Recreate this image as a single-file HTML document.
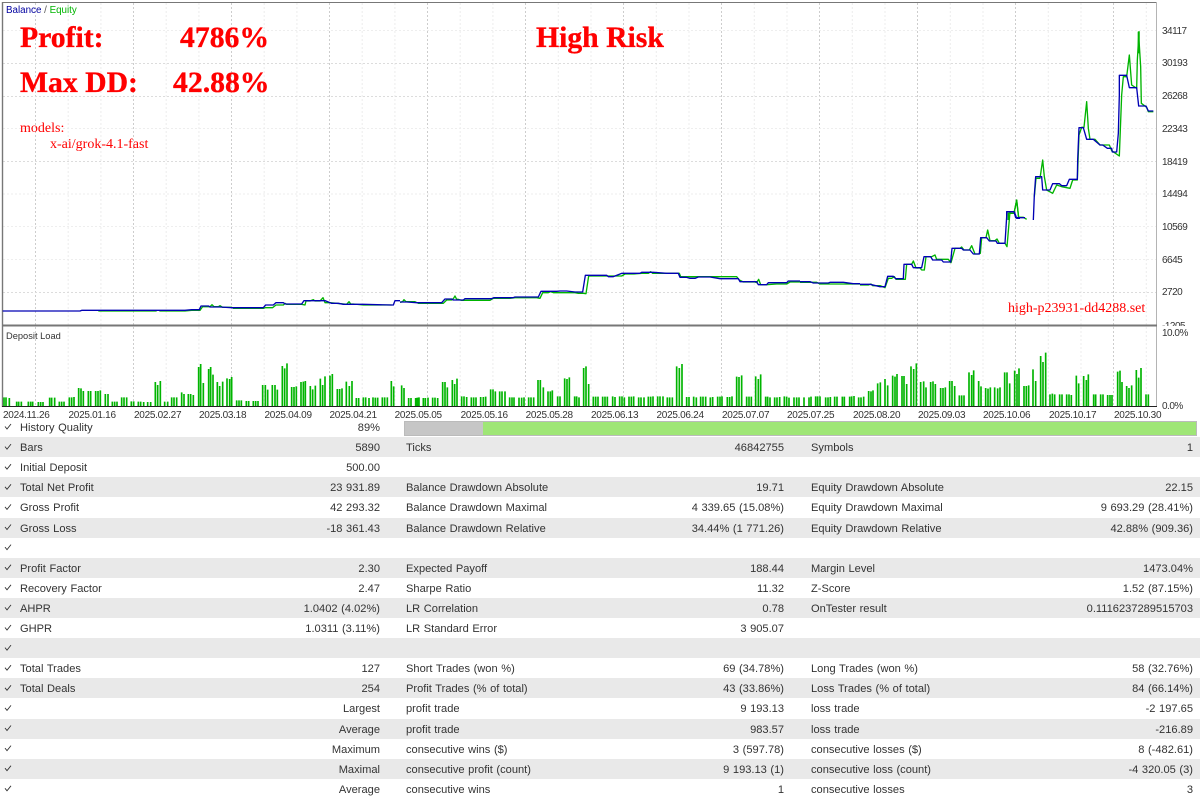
<!DOCTYPE html>
<html><head><meta charset="utf-8"><style>
html,body{margin:0;padding:0;background:#fff}
#p{position:relative;width:1200px;height:799px;overflow:hidden;background:#fff;font-family:"Liberation Sans",sans-serif;color:#333}
svg.o{position:absolute;left:0;top:0}
.t{position:absolute;white-space:nowrap}
.big{font:bold 29.7px "Liberation Serif",serif;color:#f00;line-height:34px;-webkit-text-stroke:.35px #f00}
.red{font:14px "Liberation Serif",serif;color:#f00;line-height:16px}
.ax{font-size:10px;letter-spacing:-.5px;line-height:12px;color:#333}
.d{font-size:10px;letter-spacing:-.28px;line-height:12px;top:410px;color:#333}
.r{position:absolute;left:0;width:1200px;height:20.1px;font-size:11.1px;word-spacing:.5px;line-height:20px;color:#333}
.g{background:#e9e9e9}
.r span{position:absolute;top:1px;white-space:nowrap}
.a{left:20px}.b{right:820px}.c{left:406px}.e{right:416px}.f{left:811px}.h{right:7px}
</style></head><body><div id="p">
<div class="r" style="top:417px"><span class="a">History Quality</span><span class="b">89%</span></div>
<div class="r g" style="top:437px"><span class="a">Bars</span><span class="b">5890</span><span class="c">Ticks</span><span class="e">46842755</span><span class="f">Symbols</span><span class="h">1</span></div>
<div class="r" style="top:457.2px"><span class="a">Initial Deposit</span><span class="b">500.00</span></div>
<div class="r g" style="top:477.3px"><span class="a">Total Net Profit</span><span class="b">23 931.89</span><span class="c">Balance Drawdown Absolute</span><span class="e">19.71</span><span class="f">Equity Drawdown Absolute</span><span class="h">22.15</span></div>
<div class="r" style="top:497.4px"><span class="a">Gross Profit</span><span class="b">42 293.32</span><span class="c">Balance Drawdown Maximal</span><span class="e">4 339.65 (15.08%)</span><span class="f">Equity Drawdown Maximal</span><span class="h">9 693.29 (28.41%)</span></div>
<div class="r g" style="top:517.5px"><span class="a">Gross Loss</span><span class="b">-18 361.43</span><span class="c">Balance Drawdown Relative</span><span class="e">34.44% (1 771.26)</span><span class="f">Equity Drawdown Relative</span><span class="h">42.88% (909.36)</span></div>
<div class="r" style="top:537.6px"></div>
<div class="r g" style="top:557.7px"><span class="a">Profit Factor</span><span class="b">2.30</span><span class="c">Expected Payoff</span><span class="e">188.44</span><span class="f">Margin Level</span><span class="h">1473.04%</span></div>
<div class="r" style="top:577.8px"><span class="a">Recovery Factor</span><span class="b">2.47</span><span class="c">Sharpe Ratio</span><span class="e">11.32</span><span class="f">Z-Score</span><span class="h">1.52 (87.15%)</span></div>
<div class="r g" style="top:597.9px"><span class="a">AHPR</span><span class="b">1.0402 (4.02%)</span><span class="c">LR Correlation</span><span class="e">0.78</span><span class="f">OnTester result</span><span class="h">0.1116237289515703</span></div>
<div class="r" style="top:618px"><span class="a">GHPR</span><span class="b">1.0311 (3.11%)</span><span class="c">LR Standard Error</span><span class="e">3 905.07</span></div>
<div class="r g" style="top:638.1px"></div>
<div class="r" style="top:658.2px"><span class="a">Total Trades</span><span class="b">127</span><span class="c">Short Trades (won %)</span><span class="e">69 (34.78%)</span><span class="f">Long Trades (won %)</span><span class="h">58 (32.76%)</span></div>
<div class="r g" style="top:678.3px"><span class="a">Total Deals</span><span class="b">254</span><span class="c">Profit Trades (% of total)</span><span class="e">43 (33.86%)</span><span class="f">Loss Trades (% of total)</span><span class="h">84 (66.14%)</span></div>
<div class="r" style="top:698.4px"><span class="b">Largest</span><span class="c">profit trade</span><span class="e">9 193.13</span><span class="f">loss trade</span><span class="h">-2 197.65</span></div>
<div class="r g" style="top:718.5px"><span class="b">Average</span><span class="c">profit trade</span><span class="e">983.57</span><span class="f">loss trade</span><span class="h">-216.89</span></div>
<div class="r" style="top:738.6px"><span class="b">Maximum</span><span class="c">consecutive wins ($)</span><span class="e">3 (597.78)</span><span class="f">consecutive losses ($)</span><span class="h">8 (-482.61)</span></div>
<div class="r g" style="top:758.7px"><span class="b">Maximal</span><span class="c">consecutive profit (count)</span><span class="e">9 193.13 (1)</span><span class="f">consecutive loss (count)</span><span class="h">-4 320.05 (3)</span></div>
<div class="r" style="top:778.8px"><span class="b">Average</span><span class="c">consecutive wins</span><span class="e">1</span><span class="f">consecutive losses</span><span class="h">3</span></div>

<svg class="o" width="1200" height="799" viewBox="0 0 1200 799" fill="none">
<path d="M68.2 3V406M100.9 3V406M166.2 3V406M198.9 3V406M264.2 3V406M296.9 3V406M362.2 3V406M394.9 3V406M460.2 3V406M492.9 3V406M558.3 3V406M591 3V406M656.3 3V406M689 3V406M754.3 3V406M787 3V406M852.3 3V406M885 3V406M950.3 3V406M983 3V406M1048.3 3V406M1081 3V406M1146.3 3V406" stroke="#ececec" stroke-dasharray="2 2"/>
<path d="M35.5 3V406M133.5 3V406M231.5 3V406M329.5 3V406M427.5 3V406M525.5 3V406M623.5 3V406M721.5 3V406M819.5 3V406M917.5 3V406M1015.5 3V406M1113.5 3V406" stroke="#cdcdcd" stroke-dasharray="2 2"/>
<path d="M3 30.5H1156M3 128.5H1156M3 194H1156M3 226.5H1156M3 259.5H1156" stroke="#eee" stroke-dasharray="2 2"/>
<path d="M3 63.5H1156M3 96.5H1156M3 161.5H1156M3 292.5H1156" stroke="#dcdcdc" stroke-dasharray="2 2"/>
<path d="M2 2.5H1157" stroke="#777"/><path d="M2.5 2V407" stroke="#777" stroke-width="1.4"/>
<path d="M1156.5 2V407" stroke="#b4b4b4"/><path d="M2 325.5H1157" stroke="#777" stroke-width="2"/><path d="M2 406.5H1157" stroke="#222"/>
<g transform="translate(0,320) scale(.33333)" stroke="#00b400" stroke-width="5">
<path d="M12 258V232M18 258V232M28 258V234M50 258V245M56 258V245M64 258V245M85 258V245M92 258V245M98 258V245M115 258V246M122 258V246M129 258V246M149 258V233M155 258V233M164 258V233M178 258V245M185 258V245M192 258V245M208 258V232M215 258V232M222 258V231M236 258V204M243 258V205M250 258V213M265 258V213M272 258V213M287 258V213M294 258V213M301 258V211M316 258V222M324 258V222M337 258V245M344 258V245M351 258V245M365 258V232M372 258V232M380 258V232M394 258V244M401 258V244M415 258V245M422 258V245M431 258V246M443 258V246M452 258V246M466 258V186M473 258V195M481 258V183M494 258V245M503 258V245M515 258V232M522 258V232M530 258V232M545 258V217M552 258V222M565 258V222M572 258V222M580 258V225M596 258V141M602 258V132M610 258V189M626 258V147M632 258V141M639 258V164M652 258V186M659 258V198M668 258V185M681 258V175M689 258V177M695 258V171M710 258V241M717 258V241M724 258V241M739 258V243M746 258V243M760 258V243M767 258V243M774 258V243M788 258V195M796 258V195M803 258V209M817 258V195M825 258V195M832 258V209M847 258V138M854 258V145M861 258V130M875 258V201M882 258V201M889 258V199M903 258V186M910 258V185M916 258V183M931 258V198M938 258V208M946 258V197M961 258V176M968 258V195M975 258V169M990 258V167M997 258V162M1012 258V207M1019 258V207M1026 258V205M1039 258V185M1048 258V198M1056 258V183M1069 258V234M1076 258V234M1090 258V232M1097 258V232M1107 258V234M1119 258V232M1126 258V233M1133 258V233M1147 258V232M1154 258V232M1162 258V232M1174 258V183M1181 258V199"/>
</g>
<g transform="translate(400,320) scale(.33333)" stroke="#00b400" stroke-width="5">
<path d="M5 258V196M12 258V204M26 258V234M33 258V234M47 258V234M52 258V233M57 258V232M70 258V234M76 258V234M84 258V233M98 258V233M105 258V233M113 258V234M128 258V186M135 258V186M142 258V202M157 258V180M164 258V192M171 258V176M185 258V229M192 258V229M200 258V231M214 258V232M221 258V232M228 258V232M242 258V231M250 258V231M257 258V230M272 258V208M279 258V208M286 258V214M299 258V214M306 258V214M315 258V214M329 258V232M336 258V232M342 258V232M357 258V233M365 258V233M372 258V232M386 258V232M393 258V232M401 258V232M414 258V180M421 258V180M430 258V202M444 258V214M451 258V214M457 258V211M473 258V229M480 258V229M494 258V175M501 258V177M508 258V172M524 258V229M530 258V229M537 258V232M551 258V144M558 258V139M566 258V192M580 258V230M587 258V230M594 258V230M608 258V230M615 258V230M622 258V230M638 258V229M645 258V231M659 258V229M666 258V229M673 258V232M687 258V230M694 258V230M701 258V229M716 258V232M723 258V232M732 258V232M745 258V230M752 258V230M759 258V229M773 258V229M780 258V229M789 258V229M802 258V232M809 258V232M817 258V232M830 258V139M838 258V144M846 258V132M860 258V231M867 258V231M881 258V230M889 258V232M902 258V230M909 258V230M917 258V230M931 258V232M938 258V231M953 258V230M960 258V230M966 258V229M982 258V231M989 258V231M996 258V229M1010 258V170M1017 258V171M1025 258V166M1040 258V230M1047 258V230M1054 258V230M1067 258V169M1075 258V177M1082 258V163M1097 258V230M1103 258V230M1110 258V232M1124 258V232M1131 258V232M1139 258V231M1153 258V229M1160 258V230M1167 258V233M1182 258V232M1190 258V232M1197 258V232"/>
</g>
<g transform="translate(800,320) scale(.33333)" stroke="#00b400" stroke-width="5">
<path d="M12 258V232M27 258V232M33 258V230M47 258V229M53 258V229M60 258V229M77 258V232M84 258V232M91 258V231M104 258V230M111 258V230M127 258V230M133 258V230M149 258V230M155 258V229M162 258V228M176 258V232M183 258V232M191 258V230M206 258V213M213 258V214M219 258V211M233 258V190M241 258V187M255 258V177M263 258V196M278 258V167M285 258V170M291 258V162M306 258V168M312 258V168M320 258V192M333 258V139M341 258V147M349 258V130M362 258V186M371 258V184M378 258V202M392 258V186M399 258V184M406 258V192M422 258V204M429 258V204M436 258V202M449 258V183M456 258V183M464 258V198M478 258V226M485 258V226M492 258V226M507 258V157M515 258V165M521 258V151M536 258V183M543 258V199M557 258V204M564 258V206M571 258V202M584 258V202M593 258V205M600 258V202M614 258V157M621 258V157M629 258V190M644 258V152M651 258V162M657 258V145M672 258V198M679 258V198M686 258V196M699 258V148M707 258V183M722 258V108M729 258V126M737 258V98M750 258V223M757 258V221M764 258V223M779 258V223M786 258V223M800 258V223M807 258V223M814 258V225M829 258V167M836 258V190M851 258V168M859 258V180M865 258V163M881 258V223M887 258V223M902 258V223M909 258V223M923 258V225M930 258V225M936 258V225M953 258V155M960 258V152M966 258V186M980 258V198M987 258V204M995 258V196M1009 258V150M1016 258V173M1023 258V144M1038 258V223M1045 258V223"/>
</g>
<g stroke-linejoin="round" stroke-width="4">
<g transform="translate(0,220) scale(.33333)">
<path stroke="#00b400" d="M295 273H470M478 273H555L575 271H600L608 260H630L636 254L642 260H655L660 257L668 262H695L700 265H790L797 263H818L828 255H850L855 250L860 253H905L915 255L918 243H930L940 239L945 243H960L969 233L975 248H990L1040 253L1047 245L1052 252H1060L1090 255H1175"/>
<path stroke="#0000b4" d="M8 273H240L245 271H555L575 269H598L603 258H626L630 261H660L695 263H790L797 255H820L828 248H850L855 252H905L912 242H975L995 250H1015L1030 253H1090L1175 255H1180L1185 242H1200"/>
</g>
<g transform="translate(400,220) scale(.33333)">
<path stroke="#00b400" d="M0 247L8 245L12 239L18 245H45L55 250H130L140 240H155L160 236L165 228L170 238H175L185 241H270L280 235H330L345 233H410L420 235L428 218H445L452 215L460 218H525L535 220H550L558 221L566 168H640L650 168H665L675 162H700L725 160H745L752 155L758 160H830L838 160L842 170H1010L1018 180L1030 186H1065L1070 188L1076 178L1082 194H1100L1130 192H1160L1170 186H1200"/>
<path stroke="#0000b4" d="M0 246H20L50 248H125L135 237H155L160 240H190L195 236H275L282 233H340L345 231H415L423 214H470L480 213H500L525 216H548L556 166H620L625 170H640L665 160H720L725 157H760L800 160H835L840 172H860L870 175H885L895 171H930L960 176H1015L1020 185H1070L1075 194H1100L1105 188H1160L1165 183H1200"/>
</g>
<g transform="translate(800,170) scale(.33333)">
<path stroke="#00b400" d="M0 337H50L60 342H85H180"/>
<path stroke="#0000b4" d="M0 335H30L40 339H85L90 337H130L160 341H180"/>
</g>
<g transform="translate(860,190) scale(.33333)">
<path stroke="#00b400" d="M0 285H25L33 282L38 287H60L75 293L85 265L95 265L103 260L108 268H130L136 268L140 223H155L160 213L168 234H180L185 240L193 240L198 200H215L225 195L230 208H265L273 218L285 175H300L305 171L312 180H328L335 167L345 192H355L361 190L365 143H378L383 120L390 152H405L411 147L418 160H435L441 170L450 65H463L470 30L476 85"/>
<path stroke="#0000b4" d="M0 283H30L60 290H75L83 259H100L107 266H130L132 223H155L160 233H185L192 200H212L218 210H245L250 216H272L276 175H305L310 180H330L340 192H358L362 143H380L388 153H408L412 160H435L441 65H463L470 85H480"/>
</g>
<g transform="translate(1000,20) scale(.33333)">
<path stroke="#00b400" d="M25 600V580H42L50 540L56 592H70L80 598M103 530L108 475H120L128 420L133 470L140 510L158 520L170 495L185 500L210 505L218 480H232L237 345L245 322H252L260 245L265 325L270 358H285L300 375H322L328 375L335 392L358 408L365 225L370 170H380L388 105L395 195L410 205L412 120L417 35V60L422 140L424 250L440 262L445 275H460"/>
<path stroke="#00b400" stroke-width="6" d="M416 35V100"/>
<path stroke="#0000b4" d="M20 600V575H42L47 593H75M100 600L103 525L107 470H125L128 510H150L158 491H178L185 497H200L208 478H232L233 420L237 323H250L260 358H280L300 375H308L322 385H335L337 396H350L355 340L358 225V166H380L388 203H410L416 258H438L445 273H460"/>
</g>
</g>
<rect x="404.5" y="421.5" width="792" height="14" fill="#9fe676" stroke="#bbb"/>
<rect x="405" y="422" width="78" height="13" fill="#c6c6c6"/>
<path stroke="#333" stroke-width=".9" d="M5 426.5l2 2.5 4-5M5 446.6l2 2.5 4-5M5 466.7l2 2.5 4-5M5 486.8l2 2.5 4-5M5 506.9l2 2.5 4-5M5 527l2 2.5 4-5M5 547.1l2 2.5 4-5M5 567.2l2 2.5 4-5M5 587.3l2 2.5 4-5M5 607.4l2 2.5 4-5M5 627.5l2 2.5 4-5M5 647.6l2 2.5 4-5M5 667.7l2 2.5 4-5M5 687.8l2 2.5 4-5M5 707.9l2 2.5 4-5M5 728l2 2.5 4-5M5 748.1l2 2.5 4-5M5 768.2l2 2.5 4-5M5 788.3l2 2.5 4-5"/>
</svg>

<div class="t" style="left:6px;top:5px;font-size:9.8px;line-height:12px;color:#555"><span style="color:#0000a0">Balance</span> / <span style="color:#00b400">Equity</span></div>
<div class="t big" style="left:20px;top:21px">Profit:</div>
<div class="t big" style="left:180px;top:21px">4786%</div>
<div class="t big" style="left:536px;top:21px">High Risk</div>
<div class="t big" style="left:20px;top:66px">Max DD:</div>
<div class="t big" style="left:173px;top:66px">42.88%</div>
<div class="t red" style="left:20px;top:121px">models:</div>
<div class="t red" style="left:50px;top:137px">x-ai/grok-4.1-fast</div>
<div class="t red" style="left:1008px;top:301px">high-p23931-dd4288.set</div>
<div class="t" style="left:6px;top:330px;font-size:9.3px;line-height:12px;color:#333">Deposit Load</div>

<div class="t ax" style="left:1162px;top:26px">34117</div>
<div class="t ax" style="left:1162px;top:58px">30193</div>
<div class="t ax" style="left:1162px;top:91px">26268</div>
<div class="t ax" style="left:1162px;top:124px">22343</div>
<div class="t ax" style="left:1162px;top:157px">18419</div>
<div class="t ax" style="left:1162px;top:189px">14494</div>
<div class="t ax" style="left:1162px;top:222px">10569</div>
<div class="t ax" style="left:1162px;top:255px">6645</div>
<div class="t ax" style="left:1162px;top:287px">2720</div>
<div style="position:absolute;left:1162px;top:318px;width:38px;height:8px;overflow:hidden"><div class="t ax" style="left:0;top:3px">-1205</div></div>
<div class="t ax" style="left:1162px;top:328px">10.0%</div>
<div class="t ax" style="left:1162px;top:401px">0.0%</div>

<div class="t d" style="left:3px">2024.11.26</div>
<div class="t d" style="left:68.5px">2025.01.16</div>
<div class="t d" style="left:134px">2025.02.27</div>
<div class="t d" style="left:199px">2025.03.18</div>
<div class="t d" style="left:264.5px">2025.04.09</div>
<div class="t d" style="left:329.5px">2025.04.21</div>
<div class="t d" style="left:394.6px">2025.05.05</div>
<div class="t d" style="left:460.6px">2025.05.16</div>
<div class="t d" style="left:525.6px">2025.05.28</div>
<div class="t d" style="left:591px">2025.06.13</div>
<div class="t d" style="left:656.5px">2025.06.24</div>
<div class="t d" style="left:722px">2025.07.07</div>
<div class="t d" style="left:787px">2025.07.25</div>
<div class="t d" style="left:853px">2025.08.20</div>
<div class="t d" style="left:918px">2025.09.03</div>
<div class="t d" style="left:983px">2025.10.06</div>
<div class="t d" style="left:1049px">2025.10.17</div>
<div class="t d" style="left:1114px">2025.10.30</div>
</div></body></html>
